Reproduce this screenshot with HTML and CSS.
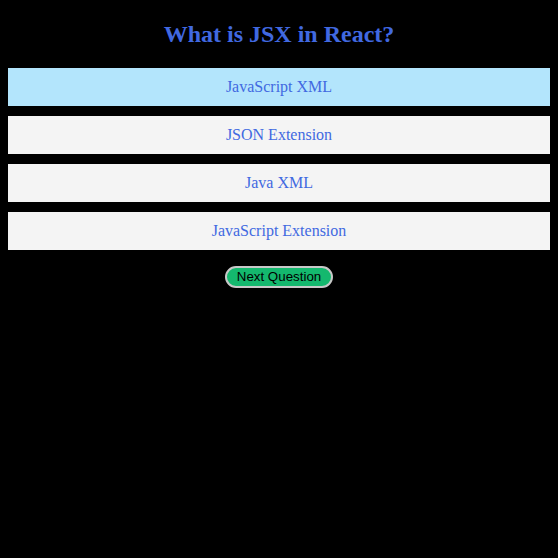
FILE: index.html
```html
<!DOCTYPE html>
<html>
<head>
<meta charset="utf-8">
<link rel="stylesheet" href="styles.css">
</head>
<body>
<div class="quiz">
  <h1 class="question">What is JSX in React?</h1>
  <div class="options">
    <div class="option selected">JavaScript XML</div>
    <div class="option">JSON Extension</div>
    <div class="option">Java XML</div>
    <div class="option">JavaScript Extension</div>
  </div>
  <div class="actions">
    <button class="next">Next Question</button>
  </div>
</div>
</body>
</html>
```
FILE: styles.css
```css
html, body {
  background: #000;
}
body {
  margin: 8px;
  font-family: "Liberation Serif", "Times New Roman", serif;
}
.question {
  margin: 12px 0 20px;
  font-size: 24px;
  line-height: 28px;
  text-align: center;
  color: #4169e1;
  font-weight: bold;
}
.options {
  display: flex;
  flex-direction: column;
  gap: 10px;
}
.option {
  background: #f4f4f4;
  color: #4169e1;
  font-size: 16px;
  line-height: 18px;
  padding: 10px;
  text-align: center;
}
.option.selected {
  background: #b3e5fc;
}
.actions {
  display: flex;
  justify-content: center;
  margin-top: 16px;
}
.next {
  font-family: "Liberation Sans", Arial, sans-serif;
  font-size: 13.33px;
  line-height: 16px;
  height: 22px;
  width: 108px;
  padding: 0;
  background: #14b86e;
  color: #000;
  border: 2px solid #c8c8c8;
  border-radius: 11px;
}
```
